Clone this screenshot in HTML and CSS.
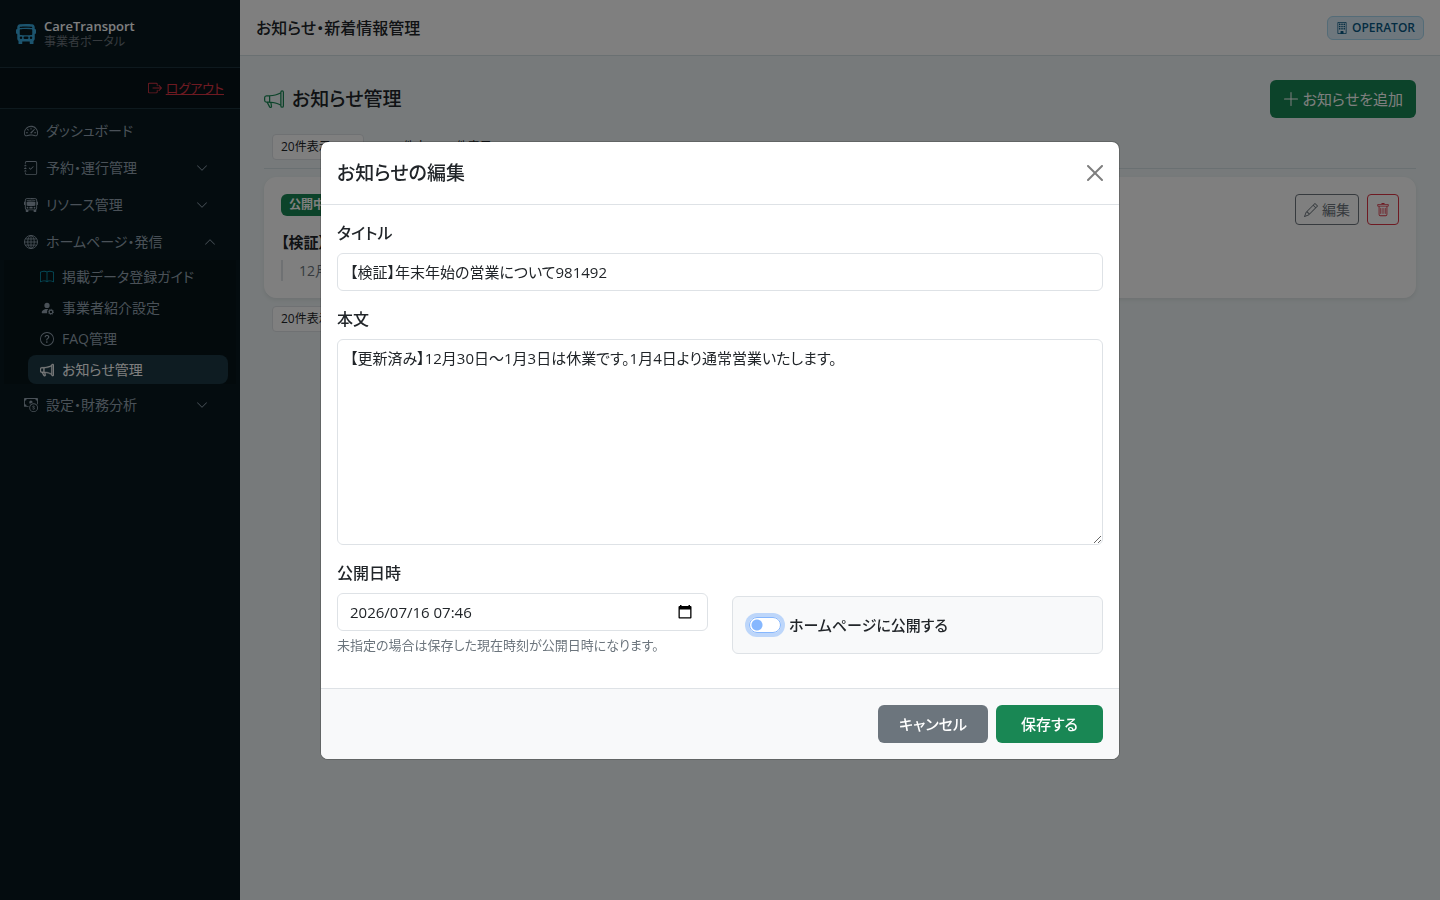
FILE: index.html
```
<!DOCTYPE html>
<html lang="ja">
<head>
    <meta charset="UTF-8">
    <meta name="viewport" content="width=device-width, initial-scale=1.0">
    <title>お知らせ・新着情報管理 | CareTransport</title>
    <link rel="stylesheet" href="styles.css">
</head>
<body>

    <div class="layout">
        <aside class="sidebar">
            <div class="brand">
                <svg class="brand-icon" viewBox="0 0 16 16"><path d="M16 7a1 1 0 0 1-1 1v3.5c0 .818-.393 1.544-1 2v2a.5.5 0 0 1-.5.5h-2a.5.5 0 0 1-.5-.5V14H5v1.5a.5.5 0 0 1-.5.5h-2a.5.5 0 0 1-.5-.5v-2a2.5 2.5 0 0 1-1-2V8a1 1 0 0 1-1-1V5a1 1 0 0 1 1-1V2.64C1 1.452 1.845.408 3.064.268A44 44 0 0 1 8 0c2.1 0 3.792.136 4.936.268C14.155.408 15 1.452 15 2.64V4a1 1 0 0 1 1 1zM3.552 3.22A43 43 0 0 1 8 3c1.837 0 3.353.107 4.448.22a.5.5 0 0 0 .104-.994A44 44 0 0 0 8 2c-1.876 0-3.426.109-4.552.226a.5.5 0 1 0 .104.994M8 4c-1.876 0-3.426.109-4.552.226A.5.5 0 0 0 3 4.723v3.554a.5.5 0 0 0 .448.497C4.574 8.891 6.124 9 8 9s3.426-.109 4.552-.226A.5.5 0 0 0 13 8.277V4.723a.5.5 0 0 0-.448-.497A44 44 0 0 0 8 4m-3 7a1 1 0 1 0-2 0 1 1 0 0 0 2 0m8 0a1 1 0 1 0-2 0 1 1 0 0 0 2 0m-7 0a1 1 0 0 0 1 1h2a1 1 0 1 0 0-2H7a1 1 0 0 0-1 1"/></svg>
                <div>
                    <div class="brand-name">CareTransport</div>
                    <div class="brand-sub">事業者ポータル</div>
                </div>
            </div>
            <div class="logout">
                <a href="#">
                    <svg class="icon" viewBox="0 0 16 16"><path d="M10 12.5a.5.5 0 0 1-.5.5h-8a.5.5 0 0 1-.5-.5v-9a.5.5 0 0 1 .5-.5h8a.5.5 0 0 1 .5.5v2a.5.5 0 0 0 1 0v-2A1.5 1.5 0 0 0 9.5 2h-8A1.5 1.5 0 0 0 0 3.5v9A1.5 1.5 0 0 0 1.5 14h8a1.5 1.5 0 0 0 1.5-1.5v-2a.5.5 0 0 0-1 0z"/><path d="M15.854 8.354a.5.5 0 0 0 0-.708l-3-3a.5.5 0 0 0-.708.708L14.293 7.5H5.5a.5.5 0 0 0 0 1h8.793l-2.147 2.146a.5.5 0 0 0 .708.708z"/></svg>
                    <span>ログアウト</span>
                </a>
            </div>
            <nav class="nav">
                <a class="nav-link" href="#">
                    <svg class="icon" viewBox="0 0 16 16"><path d="M8 4a.5.5 0 0 1 .5.5V6a.5.5 0 0 1-1 0V4.5A.5.5 0 0 1 8 4M3.732 5.732a.5.5 0 0 1 .707 0l.915.914a.5.5 0 1 1-.708.708l-.914-.915a.5.5 0 0 1 0-.707M2 10a.5.5 0 0 1 .5-.5h1.586a.5.5 0 0 1 0 1H2.5A.5.5 0 0 1 2 10m9.5 0a.5.5 0 0 1 .5-.5h1.5a.5.5 0 0 1 0 1H12a.5.5 0 0 1-.5-.5m.754-4.246a.39.39 0 0 0-.527-.02L7.547 9.31a.91.91 0 1 0 1.302 1.258l3.434-4.297a.39.39 0 0 0-.029-.518z"/><path fill-rule="evenodd" d="M0 10a8 8 0 1 1 15.547 2.661c-.442 1.253-1.845 1.602-2.932 1.25C11.309 13.488 9.475 13 8 13c-1.474 0-3.31.488-4.615.911-1.087.352-2.49.003-2.932-1.25A8 8 0 0 1 0 10m8-7a7 7 0 0 0-6.603 9.329c.203.575.923.876 1.68.63C4.397 12.533 6.358 12 8 12s3.604.532 4.923.96c.757.245 1.477-.056 1.68-.631A7 7 0 0 0 8 3"/></svg>
                    <span>ダッシュボード</span>
                </a>
                <button class="nav-link" type="button" aria-expanded="false">
                    <svg class="icon" viewBox="0 0 16 16"><path fill-rule="evenodd" d="M10.854 6.146a.5.5 0 0 1 0 .708l-3 3a.5.5 0 0 1-.708 0l-1.5-1.5a.5.5 0 1 1 .708-.708L7.5 8.793l2.646-2.647a.5.5 0 0 1 .708 0"/><path d="M3 0h10a2 2 0 0 1 2 2v12a2 2 0 0 1-2 2H3a2 2 0 0 1-2-2v-1h1v1a1 1 0 0 0 1 1h10a1 1 0 0 0 1-1V2a1 1 0 0 0-1-1H3a1 1 0 0 0-1 1v1H1V2a2 2 0 0 1 2-2"/><path d="M1 5v-.5a.5.5 0 0 1 1 0V5h.5a.5.5 0 0 1 0 1h-2a.5.5 0 0 1 0-1zm0 3v-.5a.5.5 0 0 1 1 0V8h.5a.5.5 0 0 1 0 1h-2a.5.5 0 0 1 0-1zm0 3v-.5a.5.5 0 0 1 1 0v.5h.5a.5.5 0 0 1 0 1h-2a.5.5 0 0 1 0-1z"/></svg>
                    <span>予約・運行管理</span>
                    <svg class="chevron" viewBox="0 0 16 16"><path d="M1.646 4.646a.5.5 0 0 1 .708 0L8 10.293l5.646-5.647a.5.5 0 0 1 .708.708l-6 6a.5.5 0 0 1-.708 0l-6-6a.5.5 0 0 1 0-.708"/></svg>
                </button>
                <button class="nav-link" type="button" aria-expanded="false">
                    <svg class="icon" viewBox="0 0 16 16"><path d="M5 11a1 1 0 1 1-2 0 1 1 0 0 1 2 0m8 0a1 1 0 1 1-2 0 1 1 0 0 1 2 0m-6-1a1 1 0 1 0 0 2h2a1 1 0 1 0 0-2zm1-6c-1.876 0-3.426.109-4.552.226A.5.5 0 0 0 3 4.723v3.554a.5.5 0 0 0 .448.497C4.574 8.891 6.124 9 8 9s3.426-.109 4.552-.226A.5.5 0 0 0 13 8.277V4.723a.5.5 0 0 0-.448-.497A44 44 0 0 0 8 4m0-1c-1.837 0-3.353.107-4.448.22a.5.5 0 1 1-.104-.994A44 44 0 0 1 8 2c1.876 0 3.426.109 4.552.226a.5.5 0 1 1-.104.994A43 43 0 0 0 8 3"/><path d="M15 8a1 1 0 0 0 1-1V5a1 1 0 0 0-1-1V2.64c0-1.188-.845-2.232-2.064-2.372A44 44 0 0 0 8 0C5.9 0 4.208.136 3.064.268 1.845.408 1 1.452 1 2.64V4a1 1 0 0 0-1 1v2a1 1 0 0 0 1 1v3.5c0 .818.393 1.544 1 2v2a.5.5 0 0 0 .5.5h2a.5.5 0 0 0 .5-.5V14h6v1.5a.5.5 0 0 0 .5.5h2a.5.5 0 0 0 .5-.5v-2c.607-.456 1-1.182 1-2zM8 1c2.056 0 3.71.134 4.822.261.676.078 1.178.66 1.178 1.379v8.86a1.5 1.5 0 0 1-1.5 1.5h-9A1.5 1.5 0 0 1 2 11.5V2.64c0-.72.502-1.301 1.178-1.379A43 43 0 0 1 8 1"/></svg>
                    <span>リソース管理</span>
                    <svg class="chevron" viewBox="0 0 16 16"><path d="M1.646 4.646a.5.5 0 0 1 .708 0L8 10.293l5.646-5.647a.5.5 0 0 1 .708.708l-6 6a.5.5 0 0 1-.708 0l-6-6a.5.5 0 0 1 0-.708"/></svg>
                </button>
                <button class="nav-link open" type="button" aria-expanded="true">
                    <svg class="icon" viewBox="0 0 16 16"><g class="outline"><circle cx="8" cy="8" r="7.5"/><ellipse cx="8" cy="8" rx="3.7" ry="7.5"/><path d="M8 .5v15M.5 8h15M1.5 4.5h13M1.5 11.5h13"/></g></svg>
                    <span>ホームページ・発信</span>
                    <svg class="chevron" viewBox="0 0 16 16"><path d="M1.646 4.646a.5.5 0 0 1 .708 0L8 10.293l5.646-5.647a.5.5 0 0 1 .708.708l-6 6a.5.5 0 0 1-.708 0l-6-6a.5.5 0 0 1 0-.708"/></svg>
                </button>
                <div class="subnav">
                    <a class="sub-link" href="#">
                        <svg class="icon cyan" viewBox="0 0 16 16"><path d="M1 2.828c.885-.37 2.154-.769 3.388-.893 1.33-.134 2.458.063 3.112.752v9.746c-.935-.53-2.12-.603-3.213-.493-1.18.12-2.37.461-3.287.811zm7.5-.141c.654-.689 1.782-.886 3.112-.752 1.234.124 2.503.523 3.388.893v9.923c-.918-.35-2.107-.692-3.287-.81-1.094-.111-2.278-.039-3.213.492zM8 1.783C7.015.936 5.587.81 4.287.94c-1.514.153-3.042.672-3.994 1.105A.5.5 0 0 0 0 2.5v11a.5.5 0 0 0 .707.455c.882-.4 2.303-.881 3.68-1.02 1.409-.142 2.59.087 3.223.877a.5.5 0 0 0 .78 0c.633-.79 1.814-1.019 3.222-.877 1.378.139 2.8.62 3.681 1.02A.5.5 0 0 0 16 13.5v-11a.5.5 0 0 0-.293-.455c-.952-.433-2.48-.952-3.994-1.105C10.413.809 8.985.936 8 1.783"/></svg>
                        <span>掲載データ登録ガイド</span>
                    </a>
                    <a class="sub-link" href="#">
                        <svg class="icon" viewBox="0 0 16 16"><path d="M11 5a3 3 0 1 1-6 0 3 3 0 0 1 6 0m-9 8c0 1 1 1 1 1h5.256A4.5 4.5 0 0 1 8 12.5a4.5 4.5 0 0 1 1.544-3.393Q8.844 9.002 8 9c-5 0-6 3-6 4"/><g class="outline"><circle cx="12.5" cy="12.5" r="2" stroke-width="1.3"/><circle cx="12.5" cy="12.5" r="3" stroke-dasharray="1.18"/></g></svg>
                        <span>事業者紹介設定</span>
                    </a>
                    <a class="sub-link" href="#">
                        <svg class="icon" viewBox="0 0 16 16"><path d="M8 15A7 7 0 1 1 8 1a7 7 0 0 1 0 14m0 1A8 8 0 1 0 8 0a8 8 0 0 0 0 16"/><path d="M5.255 5.786a.237.237 0 0 0 .241.247h.825c.138 0 .248-.113.266-.25.09-.656.54-1.134 1.342-1.134.686 0 1.314.343 1.314 1.168 0 .635-.374.927-.965 1.371-.673.489-1.206 1.06-1.168 1.987l.003.217a.25.25 0 0 0 .25.246h.811a.25.25 0 0 0 .25-.25v-.105c0-.718.273-.927 1.01-1.486.609-.463 1.244-.977 1.244-2.056 0-1.511-1.276-2.241-2.673-2.241-1.267 0-2.655.59-2.75 2.286m1.557 5.763c0 .533.425.927 1.01.927.609 0 1.028-.394 1.028-.927 0-.552-.42-.94-1.029-.94-.584 0-1.009.388-1.009.94"/></svg>
                        <span>FAQ管理</span>
                    </a>
                    <a class="sub-link active" href="#">
                        <svg class="icon" viewBox="0 0 16 16"><path d="M13 2.5a1.5 1.5 0 0 1 3 0v11a1.5 1.5 0 0 1-3 0v-.214c-2.162-1.241-4.49-1.843-6.912-2.083l.405 2.712A1 1 0 0 1 5.51 15.1h-.548a1 1 0 0 1-.916-.599l-1.85-3.49-.202-.003A2.014 2.014 0 0 1 0 9V7a2.02 2.02 0 0 1 1.992-2.013 75 75 0 0 0 2.483-.075c3.043-.154 6.148-.849 8.525-2.199zm1 0v11a.5.5 0 0 0 1 0v-11a.5.5 0 0 0-1 0m-1 1.35c-2.344 1.205-5.209 1.842-8 2.033v4.233q.27.015.537.036c2.568.189 5.093.744 7.463 1.993zm-9 6.215v-4.13a95 95 0 0 1-1.992.052A1.02 1.02 0 0 0 1 7v2c0 .55.448 1.002 1.006 1.009A61 61 0 0 1 4 10.065m-.657.975 1.609 3.037.01.024h.548l-.002-.014-.443-2.966a68 68 0 0 0-1.722-.082z"/></svg>
                        <span>お知らせ管理</span>
                    </a>
                </div>
                <button class="nav-link" type="button" aria-expanded="false">
                    <svg class="icon" viewBox="0 0 16 16"><path fill-rule="evenodd" d="M11 15a4 4 0 1 0 0-8 4 4 0 0 0 0 8m5-4a5 5 0 1 1-10 0 5 5 0 0 1 10 0"/><path d="M9.438 11.944c.047.596.518 1.06 1.363 1.116v.44h.375v-.443c.875-.061 1.386-.529 1.386-1.207 0-.618-.39-.936-1.09-1.1l-.296-.07v-1.2c.376.043.614.248.671.532h.658c-.047-.575-.54-1.024-1.329-1.073V8.5h-.375v.45c-.747.073-1.255.522-1.255 1.158 0 .562.378.92 1.007 1.066l.248.061v1.272c-.384-.058-.639-.27-.696-.563h-.668zm1.36-1.354c-.369-.085-.569-.26-.569-.522 0-.294.216-.514.572-.578v1.1zm.432.746c.449.104.655.272.655.569 0 .339-.257.571-.709.614v-1.195z"/><path d="M1 0a1 1 0 0 0-1 1v8a1 1 0 0 0 1 1h4.083q.088-.517.258-1H3a2 2 0 0 0-2-2V3a2 2 0 0 0 2-2h10a2 2 0 0 0 2 2v3.528c.38.34.717.728 1 1.154V1a1 1 0 0 0-1-1z"/><path d="M9.998 5.083 10 5a2 2 0 1 0-3.132 1.65 6 6 0 0 1 3.13-1.567"/></svg>
                    <span>設定・財務分析</span>
                    <svg class="chevron" viewBox="0 0 16 16"><path d="M1.646 4.646a.5.5 0 0 1 .708 0L8 10.293l5.646-5.647a.5.5 0 0 1 .708.708l-6 6a.5.5 0 0 1-.708 0l-6-6a.5.5 0 0 1 0-.708"/></svg>
                </button>
            </nav>
        </aside>

        <div class="main">
            <header class="topbar">
                <h1>お知らせ・新着情報管理</h1>
                <span class="role">
                    <svg class="role-icon" viewBox="0 0 16 16"><path d="M4 2.5a.5.5 0 0 1 .5-.5h1a.5.5 0 0 1 .5.5v1a.5.5 0 0 1-.5.5h-1a.5.5 0 0 1-.5-.5zm3 0a.5.5 0 0 1 .5-.5h1a.5.5 0 0 1 .5.5v1a.5.5 0 0 1-.5.5h-1a.5.5 0 0 1-.5-.5zm3.5-.5a.5.5 0 0 0-.5.5v1a.5.5 0 0 0 .5.5h1a.5.5 0 0 0 .5-.5v-1a.5.5 0 0 0-.5-.5zM4 5.5a.5.5 0 0 1 .5-.5h1a.5.5 0 0 1 .5.5v1a.5.5 0 0 1-.5.5h-1a.5.5 0 0 1-.5-.5zM7.5 5a.5.5 0 0 0-.5.5v1a.5.5 0 0 0 .5.5h1a.5.5 0 0 0 .5-.5v-1a.5.5 0 0 0-.5-.5zm2.5.5a.5.5 0 0 1 .5-.5h1a.5.5 0 0 1 .5.5v1a.5.5 0 0 1-.5.5h-1a.5.5 0 0 1-.5-.5zM4.5 8a.5.5 0 0 0-.5.5v1a.5.5 0 0 0 .5.5h1a.5.5 0 0 0 .5-.5v-1a.5.5 0 0 0-.5-.5zm2.5.5a.5.5 0 0 1 .5-.5h1a.5.5 0 0 1 .5.5v1a.5.5 0 0 1-.5.5h-1a.5.5 0 0 1-.5-.5zm3.5-.5a.5.5 0 0 0-.5.5v1a.5.5 0 0 0 .5.5h1a.5.5 0 0 0 .5-.5v-1a.5.5 0 0 0-.5-.5z"/><path d="M2 1a1 1 0 0 1 1-1h10a1 1 0 0 1 1 1v14a1 1 0 0 1-1 1H3a1 1 0 0 1-1-1zm11 0H3v14h3v-2.5a.5.5 0 0 1 .5-.5h3a.5.5 0 0 1 .5.5V15h3z"/></svg>
                    OPERATOR
                </span>
            </header>

            <main class="content">
                <div class="page-head">
                    <h2>
                        <svg class="head-icon" viewBox="0 0 16 16"><path d="M13 2.5a1.5 1.5 0 0 1 3 0v11a1.5 1.5 0 0 1-3 0v-.214c-2.162-1.241-4.49-1.843-6.912-2.083l.405 2.712A1 1 0 0 1 5.51 15.1h-.548a1 1 0 0 1-.916-.599l-1.85-3.49-.202-.003A2.014 2.014 0 0 1 0 9V7a2.02 2.02 0 0 1 1.992-2.013 75 75 0 0 0 2.483-.075c3.043-.154 6.148-.849 8.525-2.199zm1 0v11a.5.5 0 0 0 1 0v-11a.5.5 0 0 0-1 0m-1 1.35c-2.344 1.205-5.209 1.842-8 2.033v4.233q.27.015.537.036c2.568.189 5.093.744 7.463 1.993zm-9 6.215v-4.13a95 95 0 0 1-1.992.052A1.02 1.02 0 0 0 1 7v2c0 .55.448 1.002 1.006 1.009A61 61 0 0 1 4 10.065m-.657.975 1.609 3.037.01.024h.548l-.002-.014-.443-2.966a68 68 0 0 0-1.722-.082z"/></svg>
                        お知らせ管理
                    </h2>
                    <button class="btn btn-success" type="button">
                        <svg class="plus" viewBox="0 0 16 16"><path d="M8 1a.5.5 0 0 1 .5.5v6h6a.5.5 0 0 1 0 1h-6v6a.5.5 0 0 1-1 0v-6h-6a.5.5 0 0 1 0-1h6v-6A.5.5 0 0 1 8 1"/></svg>
                        お知らせを追加
                    </button>
                </div>

                <div class="pager pager-top">
                    <select aria-label="表示件数"><option>20件表示</option></select>
                    <span>1件中 1〜1件表示</span>
                </div>

                <article class="card">
                    <div class="card-text">
                        <span class="status">公開中</span>
                        <h3>【検証】年末年始の営業について981492</h3>
                        <p>12月30日〜1月3日は休業です。</p>
                    </div>
                    <div class="card-actions">
                        <button class="btn-sm btn-edit" type="button">
                            <svg class="icon" viewBox="0 0 16 16"><path d="M12.146.146a.5.5 0 0 1 .708 0l3 3a.5.5 0 0 1 0 .708l-10 10a.5.5 0 0 1-.168.11l-5 2a.5.5 0 0 1-.65-.65l2-5a.5.5 0 0 1 .11-.168zM11.207 2.5 13.5 4.793 14.793 3.5 12.5 1.207zm1.586 3L10.5 3.207 4 9.707V10h.5a.5.5 0 0 1 .5.5v.5h.5a.5.5 0 0 1 .5.5v.5h.293zm-9.761 5.175-.106.106-1.528 3.821 3.821-1.528.106-.106A.5.5 0 0 1 5 12.5V12h-.5a.5.5 0 0 1-.5-.5V11h-.5a.5.5 0 0 1-.468-.325"/></svg>
                            編集
                        </button>
                        <button class="btn-sm btn-delete" type="button" aria-label="削除">
                            <svg class="icon" viewBox="0 0 16 16"><path d="M5.5 5.5A.5.5 0 0 1 6 6v6a.5.5 0 0 1-1 0V6a.5.5 0 0 1 .5-.5m2.5 0a.5.5 0 0 1 .5.5v6a.5.5 0 0 1-1 0V6a.5.5 0 0 1 .5-.5m3 .5a.5.5 0 0 0-1 0v6a.5.5 0 0 0 1 0z"/><path d="M14.5 3a1 1 0 0 1-1 1H13v9a2 2 0 0 1-2 2H5a2 2 0 0 1-2-2V4h-.5a1 1 0 0 1-1-1V2a1 1 0 0 1 1-1H6a1 1 0 0 1 1-1h2a1 1 0 0 1 1 1h3.5a1 1 0 0 1 1 1zM4.118 4 4 4.059V13a1 1 0 0 0 1 1h6a1 1 0 0 0 1-1V4.059L11.882 4zM2.5 3h11V2h-11z"/></svg>
                        </button>
                    </div>
                </article>

                <div class="pager">
                    <select aria-label="表示件数"><option>20件表示</option></select>
                    <span>1件中 1〜1件表示</span>
                </div>
            </main>
        </div>
    </div>

    <div class="overlay">
        <form class="modal" role="dialog" aria-labelledby="modal-title">
            <div class="modal-header">
                <h2 id="modal-title">お知らせの編集</h2>
                <button class="close" type="button" aria-label="閉じる">
                    <svg viewBox="0 0 16 16"><path d="M.293.293a1 1 0 0 1 1.414 0L8 6.586 14.293.293a1 1 0 1 1 1.414 1.414L9.414 8l6.293 6.293a1 1 0 0 1-1.414 1.414L8 9.414l-6.293 6.293a1 1 0 0 1-1.414-1.414L6.586 8 .293 1.707a1 1 0 0 1 0-1.414"/></svg>
                </button>
            </div>
            <div class="modal-body">
                <div class="field">
                    <label for="title">タイトル</label>
                    <input class="control" id="title" type="text" value="【検証】年末年始の営業について981492">
                </div>
                <div class="field">
                    <label for="body">本文</label>
                    <textarea class="control" id="body" rows="8">【更新済み】12月30日〜1月3日は休業です。1月4日より通常営業いたします。</textarea>
                </div>
                <div class="row">
                    <div class="field">
                        <label for="date">公開日時</label>
                        <div class="control date-control">
                            <input id="date" type="text" value="2026/07/16 07:46">
                            <button type="button" aria-label="日時を選択">
                                <svg viewBox="0 0 16 16"><path fill-rule="evenodd" d="M3 1h1.500v1h7V1H13v1h.5a1 1 0 0 1 1 1v10.500a1 1 0 0 1-1 1h-11a1 1 0 0 1-1-1V3a1 1 0 0 1 1-1H3zM2.800 5.500v7.700h10.400V5.500z"/></svg>
                            </button>
                        </div>
                        <div class="help">未指定の場合は保存した現在時刻が公開日時になります。</div>
                    </div>
                    <div class="switch-box">
                        <input class="switch" id="publish" type="checkbox" role="switch">
                        <label for="publish">ホームページに公開する</label>
                    </div>
                </div>
            </div>
            <div class="modal-footer">
                <button class="btn btn-wide btn-secondary" type="button">キャンセル</button>
                <button class="btn btn-wide btn-success" type="submit">保存する</button>
            </div>
        </form>
    </div>

</body>
</html>
```
FILE: styles.css
```
* {
    box-sizing: border-box;
}

body {
    margin: 0;
    min-height: 100vh;
    font-family: "Open Sans", "Noto Sans CJK JP", sans-serif;
    font-feature-settings: "palt";
    font-size: 16px;
    line-height: 24px;
    color: #212529;
}

h1, h2, h3, p {
    margin: 0;
}

button, input, textarea, select {
    font: inherit;
    font-feature-settings: inherit;
    color: inherit;
    margin: 0;
}

svg {
    fill: currentColor;
    flex-shrink: 0;
}

.icon {
    width: 14px;
    height: 14px;
}

.outline {
    fill: none;
    stroke: currentColor;
}

.layout {
    display: flex;
    min-height: 100vh;
}

/* sidebar */

.sidebar {
    width: 240px;
    flex-shrink: 0;
    background-color: #08191f;
    color: #94a3b0;
}

.brand {
    display: flex;
    align-items: center;
    gap: 8px;
    height: 68px;
    padding: 0 16px;
    border-bottom: 1px solid #1d333d;
}

.brand-icon {
    width: 20px;
    height: 20px;
    color: #38a8dc;
}

.brand-name {
    font-size: 13px;
    line-height: 16px;
    font-weight: 600;
    color: #fff;
}

.brand-sub {
    font-size: 12px;
    line-height: 16px;
    color: #6c757d;
}

.logout {
    display: flex;
    justify-content: flex-end;
    padding: 8px 16px;
    background-color: #061318;
    border-bottom: 1px solid #1d333d;
}

.logout a {
    display: flex;
    align-items: center;
    gap: 4px;
    font-size: 13px;
    color: #dc3545;
    text-decoration: none;
}

.logout span {
    text-decoration: underline;
}

.nav {
    padding: 3px 4px;
}

.nav-link {
    display: flex;
    align-items: center;
    gap: 8px;
    width: 100%;
    padding: 8px 20px;
    border: 0;
    background: none;
    font-size: 14px;
    line-height: 21px;
    color: #94a3b0;
    text-decoration: none;
}

.chevron {
    width: 12px;
    height: 12px;
    margin-left: auto;
    margin-right: 8px;
}

.open .chevron {
    margin-right: 0;
    transform: rotate(180deg);
}

.subnav {
    padding: 2px 8px 0 24px;
    background-color: #061419;
}

.sub-link {
    display: flex;
    align-items: center;
    gap: 8px;
    margin-bottom: 2px;
    padding: 4px 12px;
    border-radius: 8px;
    font-size: 14px;
    line-height: 21px;
    color: #94a3b0;
    text-decoration: none;
}

.cyan {
    color: #0dcaf0;
    opacity: .7;
}

.active {
    background-color: #1c3844;
    color: #fff;
}

.active .icon {
    stroke: currentColor;
    stroke-width: .4px;
}

/* main column */

.main {
    flex: 1;
    min-width: 0;
    background-color: #eef5f6;
}

.topbar {
    display: flex;
    align-items: center;
    justify-content: space-between;
    height: 56px;
    padding: 0 16px;
    background-color: #fff;
    border-bottom: 1px solid #d5e0e5;
}

.topbar h1 {
    font-size: 16px;
    font-weight: 500;
}

.role {
    display: flex;
    align-items: center;
    gap: 4px;
    padding: 2px 8px;
    border: 1px solid #a9d8f0;
    border-radius: 6px;
    background-color: #dceffb;
    font-size: 12px;
    line-height: 18px;
    font-weight: 600;
    color: #075985;
}

.role-icon {
    width: 12px;
    height: 12px;
}

.content {
    padding: 24px;
}

.page-head {
    display: flex;
    align-items: center;
    justify-content: space-between;
    margin-bottom: 16px;
}

.page-head h2 {
    display: flex;
    align-items: center;
    gap: 8px;
    font-size: 19px;
    font-weight: 500;
}

.head-icon {
    width: 20px;
    height: 20px;
    color: #198754;
}

.btn {
    display: flex;
    align-items: center;
    justify-content: center;
    gap: 4px;
    padding: 6px 12px;
    border: 1px solid transparent;
    border-radius: 6px;
    font-size: 15px;
    color: #fff;
}

.btn-wide {
    min-width: 107px;
    padding: 6px 20px;
    font-weight: 500;
}

.btn-success {
    background-color: #198754;
}

.btn-secondary {
    background-color: #6c757d;
}

.plus {
    width: 16px;
    height: 16px;
}

.pager {
    display: flex;
    align-items: center;
    gap: 32px;
    padding: 8px;
    font-size: 12px;
    line-height: 18px;
}

.pager-top {
    padding: 0 8px 8px;
    margin-bottom: 8px;
    border-bottom: 1px solid #d5e0e5;
}

.pager select {
    appearance: none;
    width: 92px;
    padding: 3px 8px;
    border: 1px solid #dee2e6;
    border-radius: 4px;
    background-color: #fff;
}

.card {
    display: flex;
    justify-content: space-between;
    padding: 16px;
    border: 1px solid #fff;
    border-radius: 12px;
    background-color: #fff;
    box-shadow: 0 2px 4px rgba(0, 0, 0, .075);
}

.card-text {
    display: flex;
    flex-direction: column;
    align-items: flex-start;
}

.status {
    margin-bottom: 16px;
    padding: 2px 8px;
    border-radius: 6px;
    background-color: #198754;
    font-size: 12px;
    line-height: 18px;
    font-weight: 700;
    color: #fff;
}

.card h3 {
    margin-bottom: 8px;
    font-size: 15px;
    line-height: 20px;
    font-weight: 700;
}

.card p {
    padding-left: 16px;
    border-left: 2px solid #dee2e6;
    font-size: 14px;
    line-height: 21px;
    color: #6c757d;
}

.card-actions {
    display: flex;
    align-items: flex-start;
    gap: 8px;
}

.btn-sm {
    display: flex;
    align-items: center;
    gap: 4px;
    min-height: 31px;
    padding: 4px 8px;
    border: 1px solid;
    border-radius: 4px;
    background: none;
    font-size: 14px;
    line-height: 21px;
}

.btn-edit {
    color: #6c757d;
}

.btn-delete {
    color: #dc3545;
}

/* modal */

.overlay {
    position: fixed;
    inset: 0;
    display: flex;
    align-items: center;
    justify-content: center;
    background-color: rgba(0, 0, 0, .5);
}

.modal {
    width: 100%;
    max-width: 800px;
    border: 1px solid rgba(0, 0, 0, .175);
    border-radius: 8px;
    background-color: #fff;
    background-clip: padding-box;
    overflow: hidden;
}

.modal-header {
    display: flex;
    align-items: center;
    justify-content: space-between;
    padding: 16px;
    border-bottom: 1px solid #dee2e6;
}

.modal-header h2 {
    font-size: 19px;
    line-height: 30px;
    font-weight: 500;
}

.close {
    display: flex;
    padding: 0;
    border: 0;
    background: none;
    color: #000;
    opacity: .5;
}

.close svg {
    width: 16px;
    height: 16px;
}

.modal-body {
    padding: 16px;
}

.field {
    margin-bottom: 16px;
}

.field label {
    display: block;
    margin-bottom: 8px;
    font-weight: 500;
}

.control {
    display: block;
    width: 100%;
    padding: 6px 12px;
    border: 1px solid #dee2e6;
    border-radius: 6px;
    background-color: #fff;
    font-size: 15px;
}

textarea.control {
    resize: vertical;
}

.date-control {
    display: flex;
    align-items: center;
}

.date-control input {
    flex: 1;
    min-width: 0;
    height: 24px;
    padding: 0;
    border: 0;
    outline: 0;
}

.date-control button {
    display: flex;
    padding: 0 2px;
    border: 0;
    background: none;
    color: #000;
}

.date-control svg {
    width: 16px;
    height: 16px;
}

.help {
    margin-top: 4px;
    font-size: 13px;
    line-height: 21px;
    color: #6c757d;
}

.row {
    display: grid;
    grid-template-columns: 1fr 1fr;
    gap: 24px;
    align-items: end;
}

.switch-box {
    display: flex;
    align-items: center;
    gap: 8px;
    margin-bottom: 18px;
    padding: 16px;
    border: 1px solid #dee2e6;
    border-radius: 6px;
    background-color: #f8f9fa;
    font-size: 15px;
    font-weight: 500;
}

.switch {
    appearance: none;
    width: 32px;
    height: 16px;
    border: 1px solid #86b7fe;
    border-radius: 8px;
    background: radial-gradient(circle at 7px 7px, #86b7fe 5px, #fff 6px);
    box-shadow: 0 0 0 4px rgba(13, 110, 253, .25);
}

.modal-footer {
    display: flex;
    justify-content: flex-end;
    gap: 8px;
    padding: 16px;
    border-top: 1px solid #dee2e6;
    background-color: #f8f9fa;
}
```
